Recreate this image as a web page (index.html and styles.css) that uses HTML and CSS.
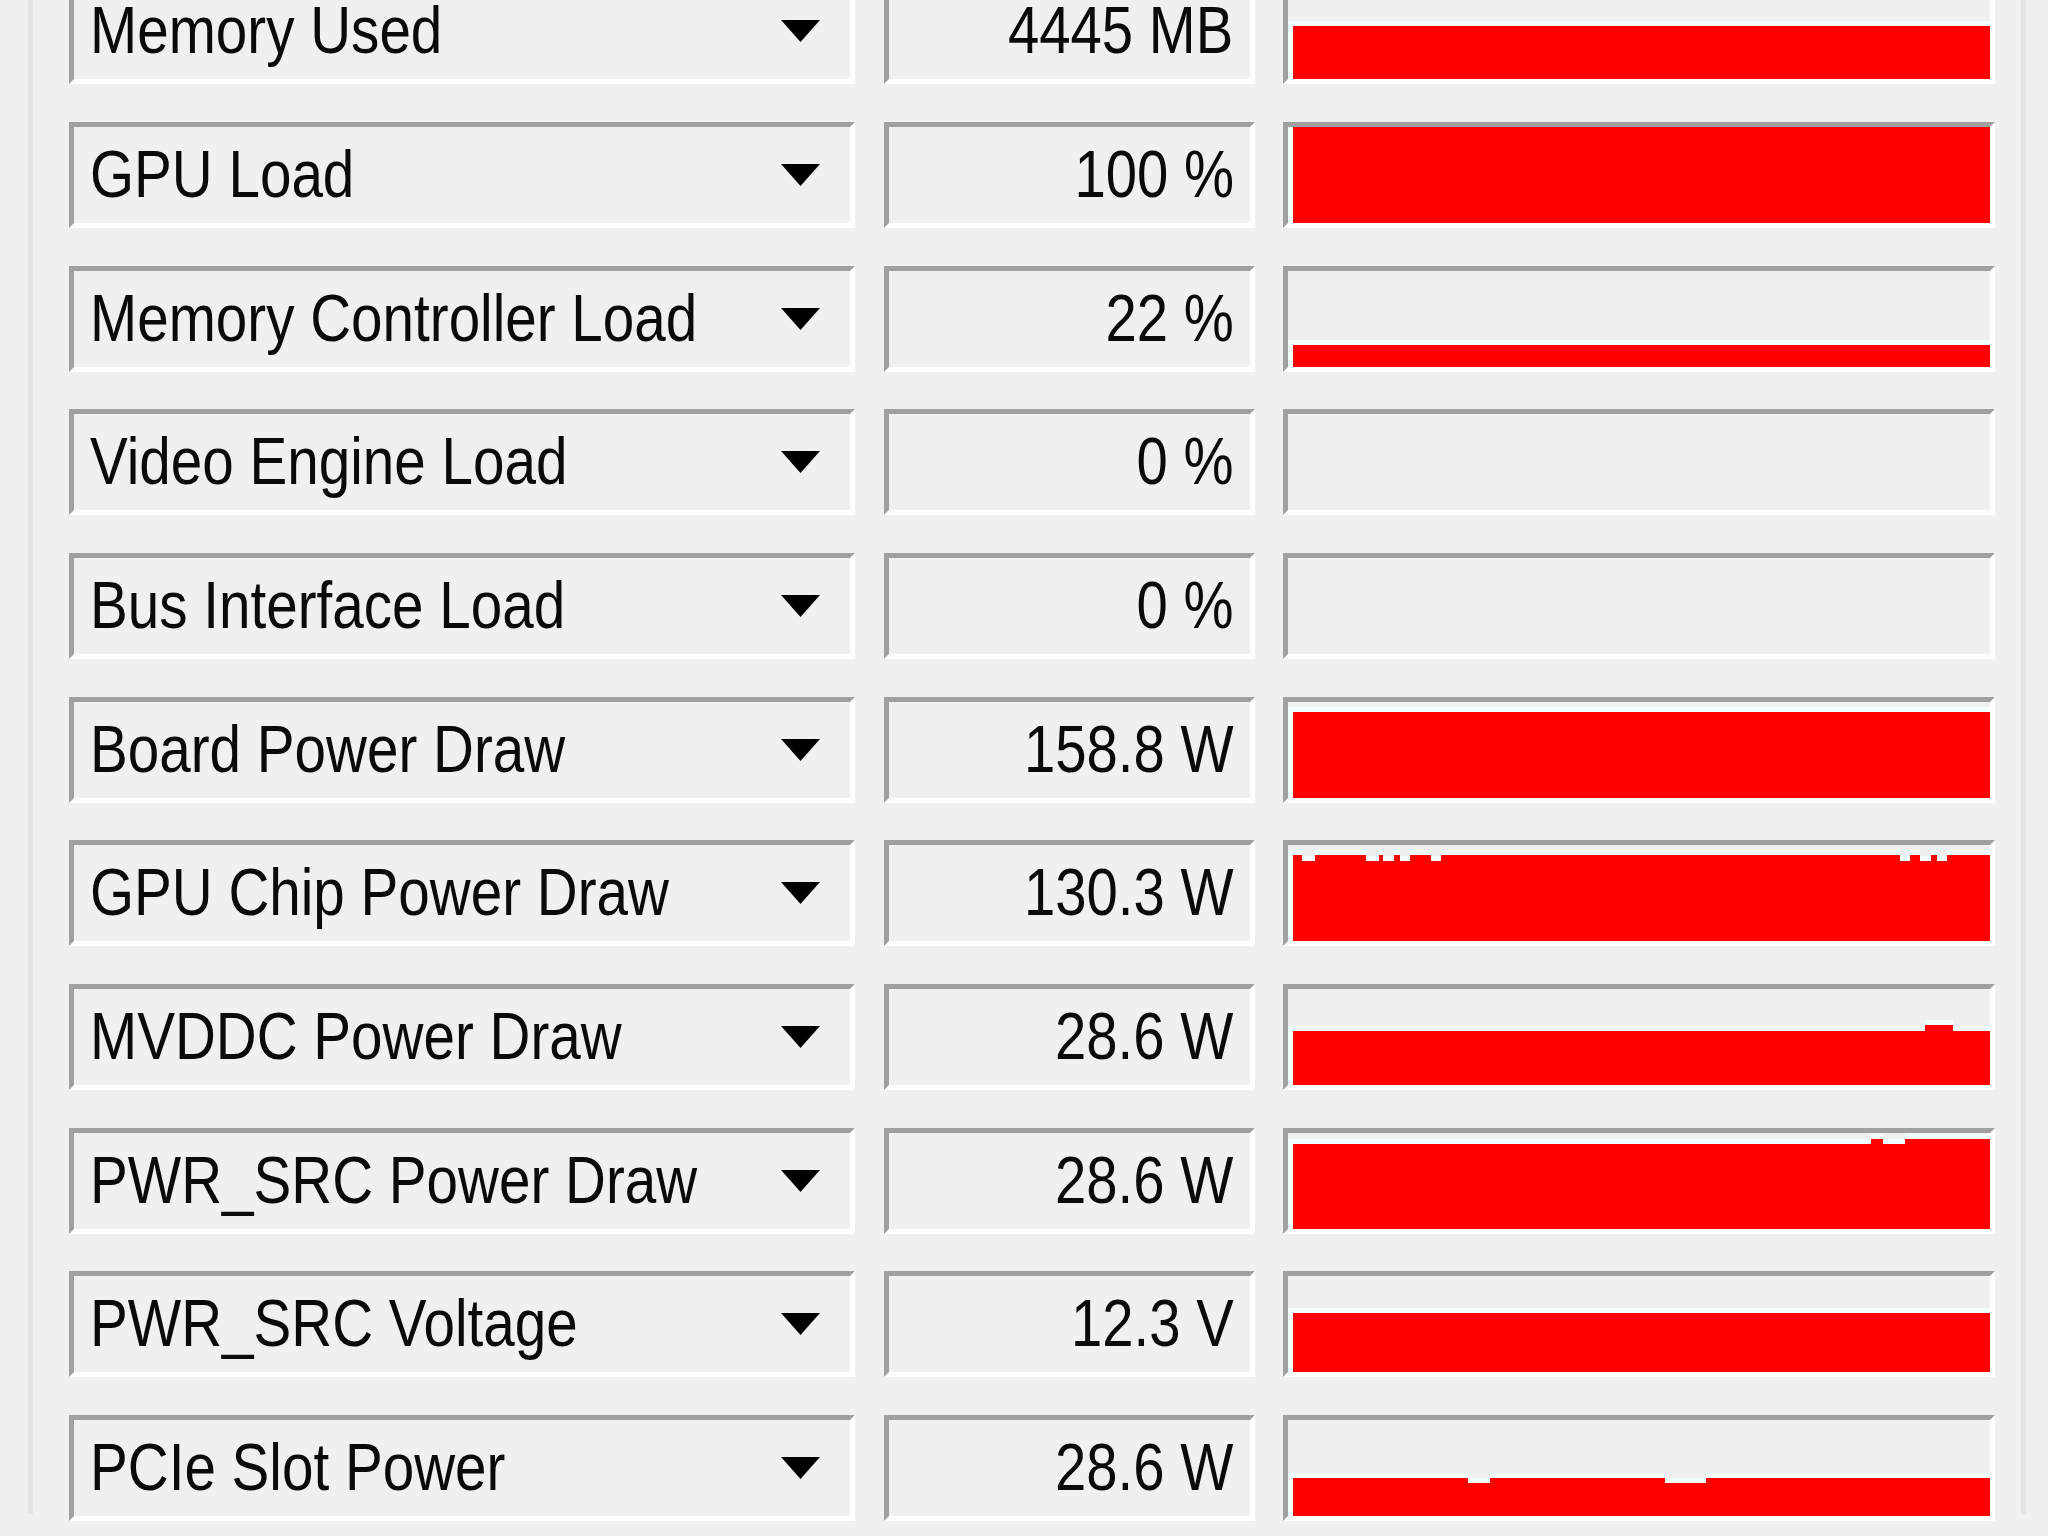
FILE: index.html
```html
<!DOCTYPE html>
<html lang="en">
<head>
<meta charset="utf-8">
<title>GPU-Z Sensors</title>
<link rel="stylesheet" href="styles.css">
</head>
<body>
<div class="panel">
  <div class="rows">
    <div class="row">
      <div class="box combo"><span class="label">Memory Used</span><svg class="arrow" viewBox="0 0 39 22"><polygon points="0,0 39,0 19.5,22"/></svg></div>
      <div class="box value"><span class="num">4445 MB</span></div>
      <div class="box graph"><svg viewBox="0 0 702 96" preserveAspectRatio="none"><path class="hl" d="M0 38H702V96H0Z"/><path class="fill" d="M5 43H702V96H5Z"/></svg></div>
    </div>
    <div class="row">
      <div class="box combo"><span class="label">GPU Load</span><svg class="arrow" viewBox="0 0 39 22"><polygon points="0,0 39,0 19.5,22"/></svg></div>
      <div class="box value"><span class="num">100 %</span></div>
      <div class="box graph"><svg viewBox="0 0 702 96" preserveAspectRatio="none"><path class="hl" d="M0 0H702V96H0Z"/><path class="fill" d="M5 0H702V96H5Z"/></svg></div>
    </div>
    <div class="row">
      <div class="box combo"><span class="label">Memory Controller Load</span><svg class="arrow" viewBox="0 0 39 22"><polygon points="0,0 39,0 19.5,22"/></svg></div>
      <div class="box value"><span class="num">22 %</span></div>
      <div class="box graph"><svg viewBox="0 0 702 96" preserveAspectRatio="none"><path class="hl" d="M0 69H702V96H0Z"/><path class="fill" d="M5 74H702V96H5Z"/></svg></div>
    </div>
    <div class="row">
      <div class="box combo"><span class="label">Video Engine Load</span><svg class="arrow" viewBox="0 0 39 22"><polygon points="0,0 39,0 19.5,22"/></svg></div>
      <div class="box value"><span class="num">0 %</span></div>
      <div class="box graph"><svg viewBox="0 0 702 96" preserveAspectRatio="none"></svg></div>
    </div>
    <div class="row">
      <div class="box combo"><span class="label">Bus Interface Load</span><svg class="arrow" viewBox="0 0 39 22"><polygon points="0,0 39,0 19.5,22"/></svg></div>
      <div class="box value"><span class="num">0 %</span></div>
      <div class="box graph"><svg viewBox="0 0 702 96" preserveAspectRatio="none"></svg></div>
    </div>
    <div class="row">
      <div class="box combo"><span class="label">Board Power Draw</span><svg class="arrow" viewBox="0 0 39 22"><polygon points="0,0 39,0 19.5,22"/></svg></div>
      <div class="box value"><span class="num">158.8 W</span></div>
      <div class="box graph"><svg viewBox="0 0 702 96" preserveAspectRatio="none"><path class="hl" d="M0 5H702V96H0Z"/><path class="fill" d="M5 10H702V96H5Z"/></svg></div>
    </div>
    <div class="row">
      <div class="box combo"><span class="label">GPU Chip Power Draw</span><svg class="arrow" viewBox="0 0 39 22"><polygon points="0,0 39,0 19.5,22"/></svg></div>
      <div class="box value"><span class="num">130.3 W</span></div>
      <div class="box graph"><svg viewBox="0 0 702 96" preserveAspectRatio="none"><path class="hl" d="M0 5H14V11H27V5H78V11H91V5H95V11H106V5H112V11H122V5H143V11H153V5H612V11H622V5H632V11H643V5H649V11H659V5H702V96H0Z"/><path class="fill" d="M5 10H14V16H27V10H78V16H91V10H95V16H106V10H112V16H122V10H143V16H153V10H612V16H622V10H632V16H643V10H649V16H659V10H702V96H5Z"/></svg></div>
    </div>
    <div class="row">
      <div class="box combo"><span class="label">MVDDC Power Draw</span><svg class="arrow" viewBox="0 0 39 22"><polygon points="0,0 39,0 19.5,22"/></svg></div>
      <div class="box value"><span class="num">28.6 W</span></div>
      <div class="box graph"><svg viewBox="0 0 702 96" preserveAspectRatio="none"><path class="hl" d="M0 37H637V31H665V37H702V96H0Z"/><path class="fill" d="M5 42H637V36H665V42H702V96H5Z"/></svg></div>
    </div>
    <div class="row">
      <div class="box combo"><span class="label">PWR_SRC Power Draw</span><svg class="arrow" viewBox="0 0 39 22"><polygon points="0,0 39,0 19.5,22"/></svg></div>
      <div class="box value"><span class="num">28.6 W</span></div>
      <div class="box graph"><svg viewBox="0 0 702 96" preserveAspectRatio="none"><path class="hl" d="M0 6H583V1H595V6H617V1H702V96H0Z"/><path class="fill" d="M5 11H583V6H595V11H617V6H702V96H5Z"/></svg></div>
    </div>
    <div class="row">
      <div class="box combo"><span class="label">PWR_SRC Voltage</span><svg class="arrow" viewBox="0 0 39 22"><polygon points="0,0 39,0 19.5,22"/></svg></div>
      <div class="box value"><span class="num">12.3 V</span></div>
      <div class="box graph"><svg viewBox="0 0 702 96" preserveAspectRatio="none"><path class="hl" d="M0 32H702V96H0Z"/><path class="fill" d="M5 37H702V96H5Z"/></svg></div>
    </div>
    <div class="row">
      <div class="box combo"><span class="label">PCIe Slot Power</span><svg class="arrow" viewBox="0 0 39 22"><polygon points="0,0 39,0 19.5,22"/></svg></div>
      <div class="box value"><span class="num">28.6 W</span></div>
      <div class="box graph"><svg viewBox="0 0 702 96" preserveAspectRatio="none"><path class="hl" d="M0 53H180V58H202V53H377V58H418V53H702V96H0Z"/><path class="fill" d="M5 58H180V63H202V58H377V63H418V58H702V96H5Z"/></svg></div>
    </div>
  </div>
</div>
</body>
</html>
```

FILE: styles.css
```css
html, body {
  margin: 0;
  padding: 0;
  background: #f0f0f0;
  overflow: hidden;
}

body {
  width: 2048px;
  height: 1536px;
  font-family: "Liberation Sans", Arial, sans-serif;
  color: #0a0a0a;
}

.panel {
  box-sizing: border-box;
  margin-left: 28px;
  width: 1998px;
  height: 1536px;
  border-left: 5px solid #e4e4e4;
  border-right: 5px solid #e4e4e4;
  padding: 0 26px 0 36px;
}

.rows {
  display: flex;
  flex-direction: column;
  row-gap: 37.67px;
  margin-top: -21.67px;
}

.row {
  display: grid;
  grid-template-columns: 786px 371px 712px;
  column-gap: 28.5px;
  height: 106px;
}

.box {
  box-sizing: border-box;
  height: 106px;
  background: #f0f0f0;
  border-top: 5px solid #a0a0a0;
  border-left: 5px solid #a0a0a0;
  border-bottom: 5px solid #ffffff;
  border-right: 5px solid #ffffff;
}

.combo {
  display: flex;
  align-items: center;
  padding-left: 16px;
  padding-right: 30px;
}

.label,
.num {
  display: inline-block;
  font-size: 67px;
  line-height: 96px;
  white-space: nowrap;
  margin-top: -2px;
}

.label {
  flex: 1;
  min-width: 0;
  transform: scaleX(0.845);
  transform-origin: left center;
}

.num {
  transform: scaleX(0.84);
  transform-origin: right center;
}

.arrow {
  width: 39px;
  height: 22px;
  flex: none;
  fill: #000;
}

.value {
  display: flex;
  align-items: center;
  justify-content: flex-end;
  padding-right: 16px;
}

.graph svg {
  display: block;
  width: 702px;
  height: 96px;
}

.graph .fill {
  fill: #ff0000;
}

.graph .hl {
  fill: #f2fefe;
}
```
